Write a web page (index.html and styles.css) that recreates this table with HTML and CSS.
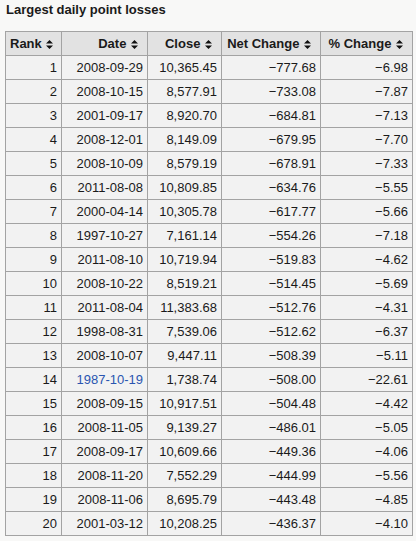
FILE: index.html
```html
<!DOCTYPE html>
<html lang="en">
<head>
  <meta charset="UTF-8" />
  <title>Largest daily point losses</title>
  <link rel="stylesheet" href="styles.css">
</head>
<body>

  <h3 class="caption">Largest daily point losses</h3>

  <table class="losses">
    <colgroup>
      <col class="c-rank">
      <col class="c-date">
      <col class="c-close">
      <col class="c-net">
      <col class="c-pct">
    </colgroup>
    <thead>
      <tr>
        <th>Rank <span class="sort"><svg width="7" height="9" viewBox="0 0 7 9"><path d="M3.5 0 L7 3.5 L0 3.5 Z M0 5.5 L7 5.5 L3.5 9 Z" fill="#111"/></svg></span></th>
        <th>Date <span class="sort"><svg width="7" height="9" viewBox="0 0 7 9"><path d="M3.5 0 L7 3.5 L0 3.5 Z M0 5.5 L7 5.5 L3.5 9 Z" fill="#111"/></svg></span></th>
        <th>Close <span class="sort"><svg width="7" height="9" viewBox="0 0 7 9"><path d="M3.5 0 L7 3.5 L0 3.5 Z M0 5.5 L7 5.5 L3.5 9 Z" fill="#111"/></svg></span></th>
        <th>Net Change <span class="sort"><svg width="7" height="9" viewBox="0 0 7 9"><path d="M3.5 0 L7 3.5 L0 3.5 Z M0 5.5 L7 5.5 L3.5 9 Z" fill="#111"/></svg></span></th>
        <th>% Change <span class="sort"><svg width="7" height="9" viewBox="0 0 7 9"><path d="M3.5 0 L7 3.5 L0 3.5 Z M0 5.5 L7 5.5 L3.5 9 Z" fill="#111"/></svg></span></th>
      </tr>
    </thead>
    <tbody>
      <tr><td>1</td><td>2008-09-29</td><td>10,365.45</td><td>−777.68</td><td>−6.98</td></tr>
      <tr><td>2</td><td>2008-10-15</td><td>8,577.91</td><td>−733.08</td><td>−7.87</td></tr>
      <tr><td>3</td><td>2001-09-17</td><td>8,920.70</td><td>−684.81</td><td>−7.13</td></tr>
      <tr><td>4</td><td>2008-12-01</td><td>8,149.09</td><td>−679.95</td><td>−7.70</td></tr>
      <tr><td>5</td><td>2008-10-09</td><td>8,579.19</td><td>−678.91</td><td>−7.33</td></tr>
      <tr><td>6</td><td>2011-08-08</td><td>10,809.85</td><td>−634.76</td><td>−5.55</td></tr>
      <tr><td>7</td><td>2000-04-14</td><td>10,305.78</td><td>−617.77</td><td>−5.66</td></tr>
      <tr><td>8</td><td>1997-10-27</td><td>7,161.14</td><td>−554.26</td><td>−7.18</td></tr>
      <tr><td>9</td><td>2011-08-10</td><td>10,719.94</td><td>−519.83</td><td>−4.62</td></tr>
      <tr><td>10</td><td>2008-10-22</td><td>8,519.21</td><td>−514.45</td><td>−5.69</td></tr>
      <tr><td>11</td><td>2011-08-04</td><td>11,383.68</td><td>−512.76</td><td>−4.31</td></tr>
      <tr><td>12</td><td>1998-08-31</td><td>7,539.06</td><td>−512.62</td><td>−6.37</td></tr>
      <tr><td>13</td><td>2008-10-07</td><td>9,447.11</td><td>−508.39</td><td>−5.11</td></tr>
      <tr><td>14</td><td><a href="#">1987-10-19</a></td><td>1,738.74</td><td>−508.00</td><td>−22.61</td></tr>
      <tr><td>15</td><td>2008-09-15</td><td>10,917.51</td><td>−504.48</td><td>−4.42</td></tr>
      <tr><td>16</td><td>2008-11-05</td><td>9,139.27</td><td>−486.01</td><td>−5.05</td></tr>
      <tr><td>17</td><td>2008-09-17</td><td>10,609.66</td><td>−449.36</td><td>−4.06</td></tr>
      <tr><td>18</td><td>2008-11-20</td><td>7,552.29</td><td>−444.99</td><td>−5.56</td></tr>
      <tr><td>19</td><td>2008-11-06</td><td>8,695.79</td><td>−443.48</td><td>−4.85</td></tr>
      <tr><td>20</td><td>2001-03-12</td><td>10,208.25</td><td>−436.37</td><td>−4.10</td></tr>
    </tbody>
  </table>

</body>
</html>
```

FILE: styles.css
```css
body {
  margin: 0;
  padding: 2px 5px;
  font-family: "Liberation Sans", Arial, sans-serif;
  font-size: 13px;
  color: #1a1a1a;
  background: #f8f8f7;
}

.caption {
  margin: 0 0 13px 1px;
  font-size: 13px;
  line-height: 16px;
  font-weight: bold;
}

.losses {
  border-collapse: collapse;
  table-layout: fixed;
  width: 407px;
  background: #f2f2f2;
}

.c-rank { width: 56px; }
.c-date { width: 86px; }
.c-close { width: 74px; }
.c-net { width: 99px; }
.c-pct { width: 92px; }

.losses th,
.losses td {
  border: 1px solid #a3a3a3;
  padding: 3px 4px;
  line-height: 17px;
  text-align: right;
  white-space: nowrap;
}

.losses th {
  background: #e2e2e2;
  font-weight: bold;
  padding-right: 9px;
}

.sort {
  display: inline-block;
  margin-left: 1px;
  vertical-align: -1px;
}

.sort svg {
  display: block;
}

.losses a {
  color: #2a55b0;
  text-decoration: none;
}
```
